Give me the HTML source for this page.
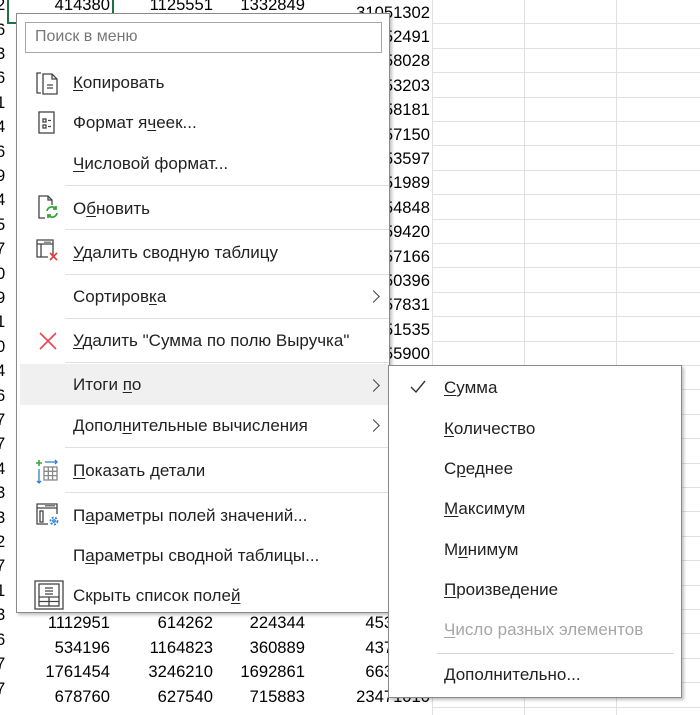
<!DOCTYPE html>
<html><head><meta charset="utf-8"><style>
*{margin:0;padding:0;box-sizing:border-box}
body{width:700px;height:715px;overflow:hidden;background:#fff;position:relative;font-family:"Liberation Sans",sans-serif;color:#000}
.hl{position:absolute;left:432px;right:0;height:1px;background:#e1e1e1}
.vl{position:absolute;top:0;bottom:0;width:1px;background:#e1e1e1}
.n{position:absolute;font-size:16.6px;text-align:right;width:120px;line-height:18px}
.rn{position:absolute;left:-4px;font-size:16.6px;line-height:18px}
.menu{position:absolute;background:#fff;border:1px solid #8a8a8a;box-shadow:2px 2px 3px rgba(0,0,0,.25)}
.it{position:absolute;left:56px;font-size:17px;line-height:18px;color:#222;white-space:nowrap}
.sep{position:absolute;left:48px;right:0;height:1px;background:#e0e0e0}
.arr{position:absolute;left:352px;width:9px;height:9px;border-right:1.5px solid #444;border-top:1.5px solid #444;transform:rotate(45deg)}
u{text-decoration:underline;text-underline-offset:2px}
.sub .it{left:55px}
svg{position:absolute}
</style></head><body>
<div class="vl" style="left:432px"></div><div class="vl" style="left:524px"></div><div class="vl" style="left:616px"></div><div class="vl" style="left:708px"></div>
<div class="hl" style="top:23px"></div><div class="hl" style="top:48px"></div><div class="hl" style="top:72px"></div><div class="hl" style="top:97px"></div><div class="hl" style="top:121px"></div><div class="hl" style="top:145px"></div><div class="hl" style="top:170px"></div><div class="hl" style="top:194px"></div><div class="hl" style="top:219px"></div><div class="hl" style="top:243px"></div><div class="hl" style="top:267px"></div><div class="hl" style="top:292px"></div><div class="hl" style="top:316px"></div><div class="hl" style="top:341px"></div><div class="hl" style="top:365px"></div><div class="hl" style="top:389px"></div><div class="hl" style="top:414px"></div><div class="hl" style="top:438px"></div><div class="hl" style="top:463px"></div><div class="hl" style="top:487px"></div><div class="hl" style="top:511px"></div><div class="hl" style="top:536px"></div><div class="hl" style="top:560px"></div><div class="hl" style="top:585px"></div><div class="hl" style="top:609px"></div><div class="hl" style="top:633px"></div><div class="hl" style="top:658px"></div><div class="hl" style="top:682px"></div><div class="hl" style="top:707px"></div>

<div class="rn" style="top:-4px">2</div><div class="rn" style="top:21px">6</div><div class="rn" style="top:45px">3</div><div class="rn" style="top:69px">6</div><div class="rn" style="top:94px">1</div><div class="rn" style="top:118px">4</div><div class="rn" style="top:143px">6</div><div class="rn" style="top:167px">9</div><div class="rn" style="top:191px">4</div><div class="rn" style="top:216px">5</div><div class="rn" style="top:240px">7</div><div class="rn" style="top:265px">0</div><div class="rn" style="top:289px">9</div><div class="rn" style="top:313px">1</div><div class="rn" style="top:338px">0</div><div class="rn" style="top:362px">4</div><div class="rn" style="top:387px">6</div><div class="rn" style="top:411px">7</div><div class="rn" style="top:435px">7</div><div class="rn" style="top:460px">4</div><div class="rn" style="top:484px">3</div><div class="rn" style="top:509px">3</div><div class="rn" style="top:533px">2</div><div class="rn" style="top:557px">7</div><div class="rn" style="top:582px">1</div><div class="rn" style="top:606px">3</div><div class="rn" style="top:631px">6</div><div class="rn" style="top:655px">7</div><div class="rn" style="top:680px">7</div>

<div style="position:absolute;left:7px;top:-2px;width:107px;height:26px;border:2px solid #1e7145"></div>

<div class="n" style="left:-10px;top:-4px">414380</div>
<div class="n" style="left:93px;top:-4px">1125551</div>
<div class="n" style="left:185px;top:-4px">1332849</div>
<div class="n" style="left:310px;top:4px">31051302</div>
<div class="n" style="left:310px;top:28px">30652491</div>
<div class="n" style="left:310px;top:52px">30658028</div>
<div class="n" style="left:310px;top:77px">30653203</div>
<div class="n" style="left:310px;top:101px">30658181</div>
<div class="n" style="left:310px;top:126px">30657150</div>
<div class="n" style="left:310px;top:150px">30653597</div>
<div class="n" style="left:310px;top:174px">30651989</div>
<div class="n" style="left:310px;top:199px">30654848</div>
<div class="n" style="left:310px;top:223px">30659420</div>
<div class="n" style="left:310px;top:248px">30657166</div>
<div class="n" style="left:310px;top:272px">30650396</div>
<div class="n" style="left:310px;top:296px">30657831</div>
<div class="n" style="left:310px;top:321px">30651535</div>
<div class="n" style="left:310px;top:345px">30655900</div>
<div class="n" style="left:-10px;top:614px">1112951</div><div class="n" style="left:93px;top:614px">614262</div><div class="n" style="left:185px;top:614px">224344</div><div class="n" style="left:310px;top:614px">4536000</div>
<div class="n" style="left:-10px;top:639px">534196</div><div class="n" style="left:93px;top:639px">1164823</div><div class="n" style="left:185px;top:639px">360889</div><div class="n" style="left:310px;top:639px">4372000</div>
<div class="n" style="left:-10px;top:663px">1761454</div><div class="n" style="left:93px;top:663px">3246210</div><div class="n" style="left:185px;top:663px">1692861</div><div class="n" style="left:310px;top:663px">6631000</div>
<div class="n" style="left:-10px;top:688px">678760</div><div class="n" style="left:93px;top:688px">627540</div><div class="n" style="left:185px;top:688px">715883</div><div class="n" style="left:310px;top:688px">23471010</div>

<div class="menu" style="left:16px;top:13px;width:374px;height:600px">
 <div style="position:absolute;left:8px;top:8px;width:357px;height:31px;border:1px solid #a6a6a6"></div>
 <div style="position:absolute;left:18px;top:14px;font-size:16px;color:#777">Поиск в меню</div>

 <svg style="left:18px;top:56px" width="24" height="26" viewBox="0 0 24 26" fill="none" stroke="#444" stroke-width="1.3"><path d="M6 3H2v20h4"/><path d="M8 4h9l5 5v15H8z"/><path d="M17 4v5h5"/><path d="M12 15h6M12 18h6"/></svg>
 <div class="it" style="top:60px"><u>К</u>опировать</div>

 <svg style="left:20px;top:96px" width="20" height="26" viewBox="0 0 20 26" fill="none" stroke="#444" stroke-width="1.3"><rect x="2" y="2" width="15" height="21"/><rect x="6" y="9" width="3" height="3"/><rect x="6" y="15" width="3" height="3"/><path d="M11 10.5h3M11 16.5h3"/></svg>
 <div class="it" style="top:100px">Формат я<u>ч</u>еек...</div>

 <div class="it" style="top:141px"><u>Ч</u>исловой формат...</div>
 <div class="sep" style="top:171px"></div>

 <svg style="left:20px;top:180px" width="24" height="28" viewBox="0 0 24 28" fill="none" stroke-width="1.3"><path d="M8 24H2V2h9l4 4v5" stroke="#444"/><path d="M11 2v4h4" stroke="#444"/><path d="M10 17a5 5 0 0 1 9-2M20 19a5 5 0 0 1-9 2" stroke="#3ca33c" stroke-width="1.8"/><path d="M19 12v3h-3M11 24v-3h3" stroke="#3ca33c" stroke-width="1.8"/></svg>
 <div class="it" style="top:186px">О<u>б</u>новить</div>
 <div class="sep" style="top:215px"></div>

 <svg style="left:18px;top:224px" width="26" height="26" viewBox="0 0 26 26" fill="none" stroke-width="1.3"><path d="M18 18V2H2v17h11" stroke="#444"/><path d="M2 6h16M6 6v13" stroke="#444"/><rect x="9" y="3.5" width="7" height="1.5" fill="#888" stroke="none"/><path d="M15 15l7 7M22 15l-7 7" stroke="#e23a3a" stroke-width="1.6"/></svg>
 <div class="it" style="top:230px"><u>У</u>далить сводную таблицу</div>
 <div class="sep" style="top:260px"></div>

 <div class="it" style="top:274px">Сортиров<u>к</u>а</div><div class="arr" style="top:278px"></div>
 <div class="sep" style="top:304px"></div>

 <svg style="left:21px;top:317px" width="20" height="20" viewBox="0 0 20 20" stroke="#e8464f" stroke-width="1.6"><path d="M2 2l16 16M18 2L2 18"/></svg>
 <div class="it" style="top:318px"><u>У</u>далить "Сумма по полю Выручка"</div>
 <div class="sep" style="top:348px"></div>

 <div style="position:absolute;left:3px;right:0;top:350px;height:41px;background:#f0f0f0"></div>
 <div class="it" style="top:362px">Итоги <u>п</u>о</div><div class="arr" style="top:367px"></div>

 <div class="it" style="top:403px">Допол<u>н</u>ительные вычисления</div><div class="arr" style="top:407px"></div>
 <div class="sep" style="top:433px"></div>

 <svg style="left:18px;top:443px" width="26" height="28" viewBox="0 0 26 28" fill="none" stroke-width="1.3"><path d="M4 3v6M1 6h6" stroke="#3ca33c" stroke-width="1.6"/><path d="M10 5h12M20 3l2 2-2 2" stroke="#2a7fd4"/><path d="M4 12v14M2 24l2 2 2-2" stroke="#2a7fd4"/><rect x="9" y="10" width="13" height="13" stroke="#888"/><path d="M9 14.3h13M9 18.6h13M13.3 10v13M17.6 10v13" stroke="#888"/></svg>
 <div class="it" style="top:448px"><u>П</u>оказать детали</div>
 <div class="sep" style="top:478px"></div>

 <svg style="left:18px;top:488px" width="26" height="28" viewBox="0 0 26 28" fill="none" stroke-width="1.3"><path d="M13 22H2V2h20v10" stroke="#444"/><path d="M2 6h20" stroke="#444"/><rect x="5" y="9" width="3" height="11" stroke="#444"/><rect x="10" y="3" width="10" height="1.5" fill="#777" stroke="none"/><circle cx="19" cy="19" r="3.5" stroke="#2a7fd4" stroke-width="1.8" stroke-dasharray="2 1.5"/><circle cx="19" cy="19" r="1.2" stroke="#2a7fd4"/></svg>
 <div class="it" style="top:493px">П<u>а</u>раметры полей значений...</div>

 <div class="it" style="top:533px">П<u>а</u>раметры сводной таблицы...</div>

 <svg style="left:17px;top:566px" width="30" height="30" viewBox="0 0 30 30" fill="none" stroke="#444" stroke-width="1.3"><rect x="1" y="1" width="28" height="28"/><rect x="5" y="4" width="20" height="22"/><path d="M11 8h8M11 11h8M11 14h8M5 17h20M5 21.5h20M15 17v9"/></svg>
 <div class="it" style="top:573px">Скрыть список поле<u>й</u></div>
</div>

<div class="menu sub" style="left:388px;top:365px;width:294px;height:333px">
 <svg style="left:21px;top:14px" width="16" height="14" viewBox="0 0 16 14" fill="none" stroke="#333" stroke-width="1.4"><path d="M1 7l5 5L15 1"/></svg>
 <div class="it" style="top:13px"><u>С</u>умма</div>
 <div class="it" style="top:54px"><u>К</u>оличество</div>
 <div class="it" style="top:94px">С<u>р</u>еднее</div>
 <div class="it" style="top:134px"><u>М</u>аксимум</div>
 <div class="it" style="top:175px">М<u>и</u>нимум</div>
 <div class="it" style="top:215px"><u>П</u>роизведение</div>
 <div class="it" style="top:255px;color:#a6a6a6"><u>Ч</u>исло разных элементов</div>
 <div class="sep" style="left:48px;right:7px;top:287px;background:#d8d8d8"></div>
 <div class="it" style="top:300px"><u>Д</u>ополнительно...</div>
</div>
</body></html>
